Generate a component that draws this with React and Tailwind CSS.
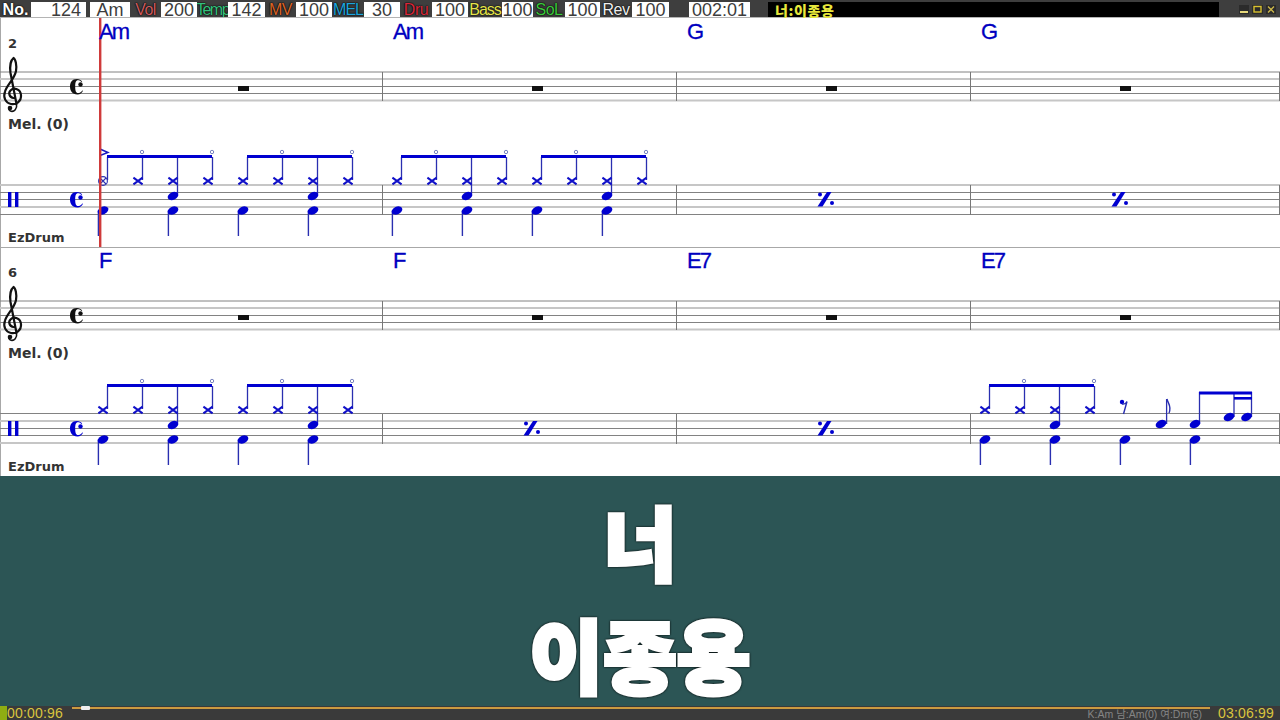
const BLUE = '#0000d0';
const STEM = '#2a2fb0';

const topItems = [
  { text: 'No.', w: 'w-[31px]', color: 'text-white font-bold', label: true },
  { text: '124', w: 'w-[55px]', right: true },
  { gap: 'w-[4px]' },
  { text: 'Am', w: 'w-[40px]' },
  { text: 'Vol', w: 'w-[31px]', color: 'text-[#cf5a5f] text-[16px] tracking-[-0.5px]', label: true },
  { text: '200', w: 'w-[36px]' },
  { text: 'Temp', w: 'w-[31px]', color: 'text-[#35c07c] text-[14px] tracking-[-1.5px]', label: true },
  { text: '142', w: 'w-[37px]' },
  { text: 'MV', w: 'w-[31px]', color: 'text-[#dc6428] text-[16px] tracking-[-0.5px]', label: true },
  { text: '100', w: 'w-[36px]' },
  { text: 'MEL', w: 'w-[32px]', color: 'text-[#1ea4dc] text-[15px] tracking-[-1px]', label: true },
  { text: '30', w: 'w-[36px]' },
  { text: 'Dru', w: 'w-[32px]', color: 'text-[#d8283c] text-[16px] tracking-[-0.5px]', label: true },
  { text: '100', w: 'w-[36px]' },
  { text: 'Bass', w: 'w-[34px]', color: 'text-[#e4e44c] text-[15px] tracking-[-1px]', label: true },
  { text: '100', w: 'w-[31px]' },
  { text: 'SoL', w: 'w-[32px]', color: 'text-[#3cc83c] text-[16px] tracking-[-0.5px]', label: true },
  { text: '100', w: 'w-[35px]' },
  { text: 'Rev', w: 'w-[32px]', color: 'text-[#eeeeee] text-[16px] tracking-[-0.5px]', label: true },
  { text: '100', w: 'w-[37px]' },
  { gap: 'w-[20px]' },
  { text: '002:01', w: 'w-[61px]' },
  { gap: 'w-[18px]' },
];

function TopBar() {
  return (
    <header className="flex h-[18px] items-stretch border-b border-[#b4b4b4] bg-[#3e3e3e] pt-[2px] font-['Liberation_Sans',sans-serif]">
      {topItems.map((it, i) => {
        if (it.gap) return <div key={i} className={it.gap} />;
        if (it.label) {
          return (
            <div key={i} className={`${it.w} ${it.color} flex items-center justify-center overflow-hidden text-[16px] leading-none [text-shadow:0_0_2px_#000,0_0_1px_#000]`}>
              {it.text}
            </div>
          );
        }
        return (
          <div key={i} className={`${it.w} flex items-center bg-white text-[18px] leading-none text-[#3c3c3c] ${it.right ? 'justify-end pr-[5px]' : 'justify-center'}`}>
            {it.text}
          </div>
        );
      })}
      <div className="flex w-[451px] items-center bg-black pl-[7px] font-['Noto_Sans_CJK_KR',sans-serif] text-[14px] font-black leading-none tracking-[0.6px] text-[#e8e83c]">
        너:이종용
      </div>
      <div className="flex flex-1 items-center justify-end gap-[3px] pr-[4px]">
        <svg width="10" height="9" viewBox="0 0 10 9"><rect width="10" height="9" fill="#2b2b2b" /><rect x="1" y="6" width="8" height="2" fill="#e6d87a" /></svg>
        <svg width="11" height="9" viewBox="0 0 11 9"><rect width="11" height="9" fill="#2b2b2b" /><rect x="2" y="1.5" width="7" height="5.5" fill="none" stroke="#d8c030" strokeWidth="1.4" /></svg>
        <svg width="10" height="9" viewBox="0 0 10 9"><rect width="10" height="9" fill="#2b2b2b" /><path d="M2 1.5 8 7.5M8 1.5 2 7.5" stroke="#cdb84a" strokeWidth="1.3" /></svg>
      </div>
    </header>
  );
}

function Head({ x, y }) {
  return <ellipse cx={x} cy={y} rx="5.6" ry="3.8" fill={BLUE} transform={`rotate(-24 ${x} ${y})`} />;
}

function Cross({ x, y = 181 }) {
  return <path d={`M${x - 4.6} ${y - 3.4}L${x + 4.6} ${y + 3.4}M${x + 4.6} ${y - 3.4}L${x - 4.6} ${y + 3.4}`} stroke="#1010c8" strokeWidth="2" fill="none" />;
}

function Kick({ x, y = 210.5 }) {
  return (
    <g>
      <line x1={x - 4.6} x2={x - 4.6} y1={y} y2={236} stroke={STEM} strokeWidth="1.4" />
      <Head x={x} y={y} />
    </g>
  );
}

// four hi-hat hits under one beam, kick and snare below
function Group({ x, first }) {
  const hits = [0, 35, 70, 105];
  return (
    <g>
      {hits.map((d) => (
        <line key={d} x1={x + d + 4.5} x2={x + d + 4.5} y1={157} y2={d === 70 ? 194 : 180} stroke={STEM} strokeWidth="1.3" />
      ))}
      <rect x={x + 4} y="155" width="105" height="3" fill={BLUE} />
      <circle cx={x + 39} cy="152" r="1.7" fill="white" stroke="#6a76b8" strokeWidth="0.9" />
      <circle cx={x + 109} cy="152" r="1.7" fill="white" stroke="#6a76b8" strokeWidth="0.9" />
      {hits.map((d) => (d === 0 && first ? null : <Cross key={d} x={x + d} />))}
      {first && (
        <g>
          <circle cx={x} cy="181" r="4.4" fill="none" stroke="#2a2fb0" strokeWidth="1.1" />
          <path d={`M${x - 3} 178L${x + 3} 184M${x + 3} 178L${x - 3} 184`} stroke="#2a2fb0" strokeWidth="1.1" />
          <path d={`M${x - 3} 149L${x + 5} 152.5L${x - 3} 155.5`} fill="none" stroke="#1818c0" strokeWidth="1.4" />
        </g>
      )}
      <Head x={x + 70} y={196} />
      <Kick x={x} />
      <Kick x={x + 70} />
    </g>
  );
}

function Percent({ x }) {
  return (
    <g fill={BLUE}>
      <polygon points={`${x - 8.5},206.5 ${x - 3.5},206.5 ${x + 5.5},192 ${x + 1},192`} />
      <circle cx={x - 6} cy="194.5" r="2" />
      <circle cx={x + 6} cy="203" r="2" />
    </g>
  );
}

function TrebleClef() {
  return (
    <g fill="none" stroke="#111" strokeLinecap="round">
      <path strokeWidth="2.2" d="M13.5 98C9.5 97.5 8 93 10.5 90.5C14 87 20.5 89 21 95C21.5 101.5 16 105 11 104C5.5 103 3 97.5 5 91.5C7 85 14.5 79 16 71C17 65.5 15.5 59 13.5 58C11 60 9.5 66 10.5 73L16.5 104" />
      <path strokeWidth="1.6" d="M16.5 104C17.5 109 14 112 11 111.3C8.5 110.7 8 107.5 10 107" />
      <circle cx="10" cy="108" r="2.3" fill="#111" stroke="none" />
    </g>
  );
}

function CommonTime({ dy, color }) {
  return (
    <g transform={`translate(0 ${dy})`} fill={color}>
      <path d="M77 79C72 79 70 82.5 70 86.5C70 90.5 72 94.5 77.5 94.5C80 94.5 82 93 83 90.8L82.3 90.4C81 92.4 79.5 93 78 93C75.8 93 75.2 90.5 75.2 86.5C75.2 82.5 75.8 80.2 78 80.2C79.5 80.2 80.5 80.8 81.5 82L82.2 81.5C81 80 79 79 77 79Z" />
      <circle cx="80.5" cy="84.5" r="2.2" />
    </g>
  );
}

function Staff({ lines, barTop, barBottom }) {
  return (
    <g>
      {lines.map(([y, light]) => (
        <line key={y} x1="0" x2="1280" y1={y} y2={y} stroke={light ? '#c6c6c6' : '#828282'} strokeWidth={light ? 2 : 1} />
      ))}
      {[382.5, 676.5, 970.5, 1279.5].map((x) => (
        <line key={x} x1={x} x2={x} y1={barTop} y2={barBottom} stroke="#777" strokeWidth="1" />
      ))}
    </g>
  );
}

const melodyLines = [[72, false], [79, true], [86.5, false], [93.5, false], [100.5, true]];
const drumLinesA = [[185, true], [192.5, false], [199.5, false], [207, true], [214.5, false]];
const drumLinesB = [[184.5, false], [192, true], [199.5, false], [206.5, false], [214, true]];

function System({ number, chords, drumLines, children, topLine }) {
  return (
    <section className={`relative h-[229px] border-l border-[#a8a8a8] bg-white ${topLine ? 'border-t border-t-[#a8a8a8]' : ''}`}>
      <svg className={`absolute left-[-1px] block ${topLine ? 'top-[-1px]' : 'top-0'}`} width="1280" height="229" viewBox="0 18 1280 229">
        <Staff lines={melodyLines} barTop={72} barBottom={101} />
        <Staff lines={drumLines} barTop={185} barBottom={215} />
        <TrebleClef />
        <CommonTime dy={0} color="#111" />
        <CommonTime dy={113} color={BLUE} />
        <rect x="8" y="192" width="3.4" height="15" fill={BLUE} />
        <rect x="15" y="192" width="3.4" height="15" fill={BLUE} />
        {[238, 532, 826, 1120].map((x) => (
          <rect key={x} x={x} y="86" width="11" height="5" fill="#111" />
        ))}
        {children}
      </svg>
      <div className={`relative flex flex-col font-['DejaVu_Sans',sans-serif] font-bold text-[#333] ${topLine ? 'mt-[-1px]' : ''}`}>
        <div className="grid h-[19px] grid-cols-[repeat(4,294px)] pl-[98px] pt-[2px] font-['Liberation_Sans',sans-serif] text-[22px] font-normal leading-[23px] tracking-[-2px] text-[#0000c0] [-webkit-text-stroke:0.3px_#0000c0]">
          {chords.map((c, i) => (
            <span key={i}>{c}</span>
          ))}
        </div>
        <div className="pl-[7px] text-[13px] leading-[14px]">{number}</div>
        <div className="mt-[65px] pl-[7px] text-[14px] leading-[16px]">Mel. (0)</div>
        <div className="mt-[98px] pl-[7px] text-[13px] leading-[16px]">EzDrum</div>
      </div>
    </section>
  );
}

export default function App() {
  return (
    <div className="flex h-[720px] w-[1280px] flex-col overflow-hidden bg-[#2c5555]">
      <TopBar />
      <System number="2" chords={['Am', 'Am', 'G', 'G']} drumLines={drumLinesA}>
        <Group x={103} first />
        <Group x={243} />
        <Group x={397} />
        <Group x={537} />
        <Percent x={826} />
        <Percent x={1120} />
        <rect x="99" y="18" width="2.4" height="229" fill="#cf3a3a" />
      </System>
      <System number="6" chords={['F', 'F', 'E7', 'E7']} drumLines={drumLinesB} topLine>
        <Group x={103} />
        <Group x={243} />
        <Percent x={532} />
        <Percent x={826} />
        <Group x={985} />
        <Kick x={1125} />
        <Kick x={1195} />
        {/* eighth rest */}
        <circle cx="1122" cy="173" r="2.2" fill={BLUE} />
        <path d="M1122 175C1124 175.5 1126 174.5 1127 172.5L1123.5 185" fill="none" stroke={STEM} strokeWidth="1.4" />
        {/* eighth note */}
        <line x1="1166.6" x2="1166.6" y1="170" y2="195" stroke={STEM} strokeWidth="1.3" />
        <path d="M1167 170C1168 175 1172 177 1169 184" fill="none" stroke={STEM} strokeWidth="1.4" />
        <Head x={1161} y={195} />
        {/* eighth + two sixteenths */}
        <line x1="1199.5" x2="1199.5" y1="163" y2="195" stroke={STEM} strokeWidth="1.3" />
        <line x1="1234" x2="1234" y1="163" y2="188" stroke={STEM} strokeWidth="1.3" />
        <line x1="1251.5" x2="1251.5" y1="163" y2="188" stroke={STEM} strokeWidth="1.3" />
        <rect x="1199" y="162.5" width="53" height="3" fill={BLUE} />
        <rect x="1234" y="168" width="18" height="2.6" fill={BLUE} />
        <Head x={1195} y={195} />
        <Head x={1229} y={188} />
        <Head x={1246.5} y={188} />
      </System>
      <main className="flex h-[230px] flex-col items-center bg-[#2c5555] pt-[8px] font-['Noto_Sans_CJK_KR',sans-serif] font-black text-white [-webkit-text-stroke:4px_#fff]">
        <div className="text-[80px] leading-[110px] drop-shadow-[0_0_1px_#000]">너</div>
        <div className="mt-[8px] text-[80px] leading-[100px] drop-shadow-[0_0_1px_#000]">이종용</div>
      </main>
      <footer className="flex h-[14px] bg-[#3a3a3a] font-['Liberation_Sans',sans-serif]">
        <div className="w-[7px] bg-[#8fae12]" />
        <div className="w-[65px] text-[14px] leading-[14px] tracking-[0.2px] text-[#d9c53e]">00:00:96</div>
        <div className="flex w-[1138px] flex-col">
          <div className="relative mt-[1px] h-[2px] shrink-0 bg-[#cc9a40]">
            <div className="absolute left-[9px] top-[-1px] h-[4px] w-[9px] rounded-[1px] bg-[#eeeeee]" />
          </div>
          <div className="pr-[8px] text-right font-['Liberation_Sans','Noto_Sans_CJK_KR',sans-serif] text-[10.5px] leading-[11px] text-[#858585]">
            K:Am 남:Am(0) 여:Dm(5)
          </div>
        </div>
        <div className="flex-1 pl-[8px] text-[14px] leading-[14px] tracking-[0.2px] text-[#d9c53e]">03:06:99</div>
      </footer>
    </div>
  );
}
